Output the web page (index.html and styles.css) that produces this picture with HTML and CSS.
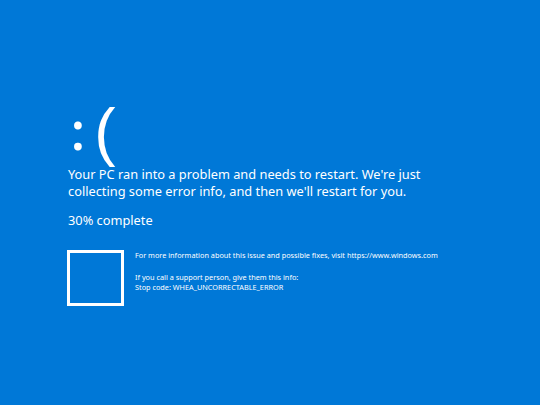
FILE: index.html
```html
<!DOCTYPE html>
<html>
<head>
<meta charset="utf-8">
<link rel="stylesheet" href="styles.css">
</head>
<body>
<main class="screen">
  <div class="face"><span class="eyes">:</span><span class="mouth">(</span></div>
  <p class="message">Your PC ran into a problem and needs to restart. We're just<br>collecting some error info, and then we'll restart for you.</p>
  <p class="progress">30% complete</p>
  <div class="details">
    <div class="qr"></div>
    <div class="info">
      <p class="more">For more information about this issue and possible fixes, visit https://www.windows.com</p>
      <p class="support">If you call a support person, give them this info:<br>Stop code: WHEA_UNCORRECTABLE_ERROR</p>
    </div>
  </div>
</main>
</body>
</html>
```
FILE: styles.css
```css
html, body {
  margin: 0;
  padding: 0;
  width: 540px;
  height: 405px;
  background: #0078d7;
  overflow: hidden;
}
.screen {
  box-sizing: border-box;
  height: 405px;
  padding: 98px 0 0 68px;
  color: #ffffff;
  font-family: "Noto Sans", "DejaVu Sans", sans-serif;
}
.face {
  font-family: "Liberation Sans", "Noto Sans", sans-serif;
  font-size: 64px;
  line-height: 68px;
  height: 68px;
}
.eyes {
  font-family: "Noto Sans", "DejaVu Sans", sans-serif;
  font-size: 50px;
  font-weight: 600;
  line-height: 1;
  vertical-align: 4px;
  margin-left: 3px;
}
.mouth {
  margin-left: 9.5px;
}
.message {
  margin: 0;
  font-size: 12.8px;
  line-height: 17px;
}
.progress {
  margin: 11.5px 0 0;
  font-size: 12.8px;
  line-height: 17px;
}
.details {
  display: flex;
  gap: 11px;
  margin-top: 21.5px;
  margin-left: -1px;
}
.qr {
  box-sizing: border-box;
  width: 57px;
  height: 56px;
  border: 3px solid #ffffff;
}
.info {
  font-size: 7.3px;
  line-height: 10px;
}
.info p {
  margin: 0;
}
.support {
  margin-top: 12px !important;
}
```
